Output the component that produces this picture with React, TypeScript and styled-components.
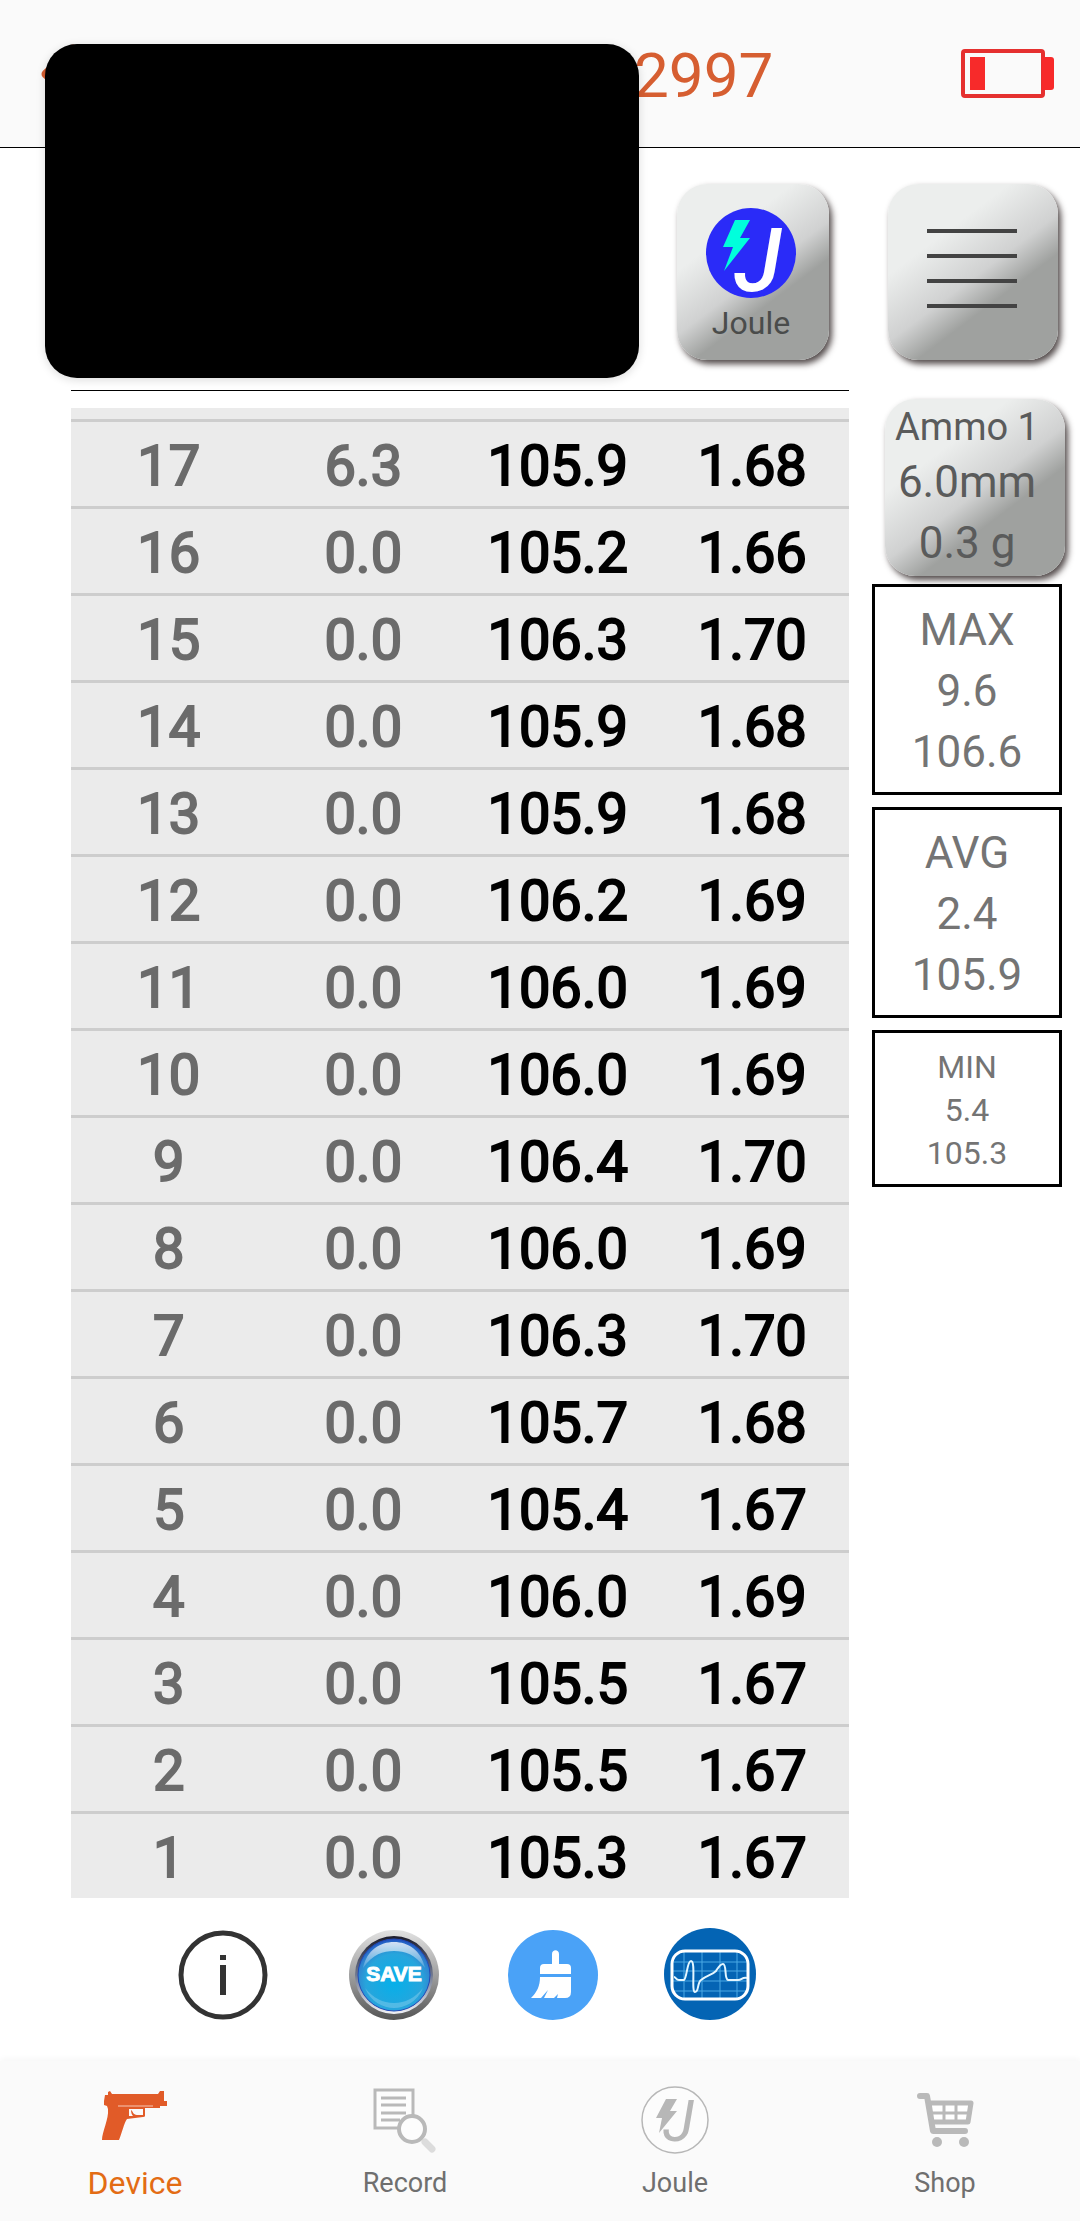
import React from "react";
import styled, { createGlobalStyle, css } from "styled-components";

const GlobalStyle = createGlobalStyle`
  * { box-sizing: border-box; }
  body {
    margin: 0;
    background: #ffffff;
    font-family: Roboto, "Liberation Sans", sans-serif;
  }
  button { font: inherit; color: inherit; }
`;

const Page = styled.div`
  position: relative;
  display: flex;
  flex-direction: column;
  min-height: 100vh;
`;

const Header = styled.header`
  display: flex;
  align-items: center;
  height: 148px;
  padding: 0 26px 0 40px;
  background: #fafafa;
  border-bottom: 1px solid #000000;
`;

const PlainButton = styled.button`
  display: block;
  padding: 0;
  border: 0;
  background: none;
  cursor: pointer;

  svg { display: block; }
`;

const Title = styled.h1`
  flex: 1;
  margin: 0 0 0 556px;
  padding-top: 5px;
  color: #d65e31;
  font-size: 62px;
  font-weight: 400;
  line-height: 72px;
`;

const PrivacyCover = styled.div`
  position: absolute;
  top: 44px;
  left: 45px;
  width: 594px;
  height: 334px;
  border-radius: 32px;
  background: #000000;
  box-shadow: 0 2px 10px rgba(0, 0, 0, 0.14);
`;

const Main = styled.main`
  display: flex;
  gap: 23px;
  padding-left: 71px;
`;

const ShotColumn = styled.section`
  flex: 1;
`;

const Readout = styled.div`
  display: flex;
  justify-content: flex-end;
  height: 243px;
  margin-bottom: 17px;
  padding: 36px 20px 0 0;
  border-bottom: 1px solid #000000;
`;

const glossy = css`
  border: 0;
  border-radius: 30px;
  background: linear-gradient(143deg, #eceeed 0%, #eceeed 30%, #d0d1d1 52%, #9fa19f 65%, #9fa19f 100%);
  box-shadow: 3px 4px 6px rgba(40, 30, 30, 0.8);
  cursor: pointer;
`;

const JouleButton = styled.button`
  ${glossy}
  display: flex;
  flex-direction: column;
  align-items: center;
  gap: 6px;
  width: 152px;
  height: 176px;
  padding: 24px 4px 0 0;
  color: #4a4c4b;
  font-size: 32px;
  line-height: 38px;

  svg { overflow: visible; }
`;

const MenuButton = styled.button`
  ${glossy}
  display: flex;
  flex-direction: column;
  align-items: center;
  gap: 21px;
  width: 170px;
  height: 176px;
  margin: 0 0 39px 16px;
  padding: 45px 2px 0 0;
`;

const MenuLine = styled.span`
  width: 90px;
  height: 4px;
  background: #434343;
`;

const AmmoButton = styled.button`
  ${glossy}
  display: flex;
  flex-direction: column;
  align-items: center;
  width: 180px;
  height: 177px;
  margin: 0 0 8px 13px;
  padding: 3px 16px 0 0;
  color: #5a5b5b;
  font-size: 44px;
  line-height: 61px;
  white-space: nowrap;
`;

const AmmoName = styled.span`
  font-size: 38px;
  line-height: 50px;
`;

const Side = styled.aside`
  width: 208px;
  padding-top: 36px;
`;

const StatBox = styled.div<{ $small?: boolean }>`
  display: flex;
  flex-direction: column;
  align-items: center;
  width: 190px;
  margin-bottom: 12px;
  padding: 13px 0 9px;
  border: 3px solid #000000;
  color: #747474;
  font-size: ${(p) => (p.$small ? 32 : 44)}px;
  line-height: ${(p) => (p.$small ? 43 : 61)}px;
`;

const ShotList = styled.div`
  padding-top: 11px;
  background: #ebebeb;
`;

const ShotTable = styled.table`
  width: 100%;
  table-layout: fixed;
  border-collapse: separate;
  border-spacing: 0;
`;

const Cell = styled.td<{ $strong?: boolean }>`
  height: 87px;
  padding: 4px 0 0 1px;
  border-top: 3px solid #cdcdcd;
  color: ${(p) => (p.$strong ? "#000000" : "#6b6b6b")};
  -webkit-text-stroke: 2px ${(p) => (p.$strong ? "#000000" : "#6b6b6b")};
  font-size: 56px;
  line-height: 80px;
  text-align: center;
`;

const Toolbar = styled.div`
  display: grid;
  grid-template-columns: 171px 159px 156px 93px;
  align-items: center;
  padding: 30px 0 40px 178px;
`;

const Nav = styled.nav`
  display: grid;
  grid-template-columns: repeat(4, 1fr);
  height: 160px;
  margin-top: auto;
  background: #fafafa;
  box-shadow: 0 -2px 6px rgba(0, 0, 0, 0.04);
`;

const NavLink = styled.a<{ $active?: boolean }>`
  display: flex;
  flex-direction: column;
  align-items: center;
  gap: 9px;
  padding-top: 26px;
  color: ${(p) => (p.$active ? "#e36c14" : "#6f6f6f")};
  font-size: ${(p) => (p.$active ? 32 : 27)}px;
  line-height: 38px;
  text-decoration: none;

  svg { display: block; overflow: visible; }
`;

type Shot = [number, string, string, string];

const shots: Shot[] = [
  [17, "6.3", "105.9", "1.68"],
  [16, "0.0", "105.2", "1.66"],
  [15, "0.0", "106.3", "1.70"],
  [14, "0.0", "105.9", "1.68"],
  [13, "0.0", "105.9", "1.68"],
  [12, "0.0", "106.2", "1.69"],
  [11, "0.0", "106.0", "1.69"],
  [10, "0.0", "106.0", "1.69"],
  [9, "0.0", "106.4", "1.70"],
  [8, "0.0", "106.0", "1.69"],
  [7, "0.0", "106.3", "1.70"],
  [6, "0.0", "105.7", "1.68"],
  [5, "0.0", "105.4", "1.67"],
  [4, "0.0", "106.0", "1.69"],
  [3, "0.0", "105.5", "1.67"],
  [2, "0.0", "105.5", "1.67"],
  [1, "0.0", "105.3", "1.67"],
];

const BackIcon = () => (
  <svg width="38" height="66" viewBox="0 0 38 66">
    <path d="M33 8 L6 33 L33 58" fill="none" stroke="#d65e31" strokeWidth="9" strokeLinecap="round" strokeLinejoin="round" />
  </svg>
);

const BatteryIcon = () => (
  <svg width="93" height="49" viewBox="0 0 93 49" role="img" aria-label="Battery low">
    <rect x="2" y="2" width="80" height="45" rx="2" fill="none" stroke="#e5302f" strokeWidth="4" />
    <rect x="9" y="8" width="15" height="33" fill="#f72a2a" />
    <path d="M81 8 H90 Q93 8 93 11 V38 Q93 41 90 41 H81 Z" fill="#f72a2a" />
  </svg>
);

const JouleIcon = () => (
  <svg width="90" height="90" viewBox="0 0 90 90" aria-hidden="true">
    <circle cx="45" cy="45" r="45" fill="#2a2bf8" />
    <path d="M29 12 H44 L34 30 H44 L18 63 L27 39 H17 Z" fill="#00ffdc" />
    <text x="28" y="83" fill="#ffffff" fontFamily="Roboto, sans-serif" fontSize="88" fontStyle="italic" fontWeight="500">J</text>
  </svg>
);

const InfoIcon = () => (
  <svg width="90" height="90" viewBox="0 0 90 90">
    <circle cx="45" cy="45" r="42" fill="none" stroke="#333333" strokeWidth="5" />
    <rect x="42" y="25" width="6" height="5" fill="#333333" />
    <rect x="42" y="35" width="6" height="30" fill="#333333" />
  </svg>
);

const SaveIcon = () => (
  <svg width="90" height="90" viewBox="0 0 90 90">
    <defs>
      <linearGradient id="rim" x1="0" y1="0" x2="0" y2="1">
        <stop offset="0" stopColor="#e2e2e2" />
        <stop offset="0.5" stopColor="#a0a0a0" />
        <stop offset="1" stopColor="#555555" />
      </linearGradient>
      <linearGradient id="well" x1="0" y1="0" x2="0" y2="1">
        <stop offset="0" stopColor="#1c1c2c" />
        <stop offset="0.5" stopColor="#6f7890" />
        <stop offset="1" stopColor="#f2f2f6" />
      </linearGradient>
      <radialGradient id="glass" cx="0.5" cy="0.6" r="0.6">
        <stop offset="0" stopColor="#05b0ea" />
        <stop offset="0.65" stopColor="#27a5dc" />
        <stop offset="0.85" stopColor="#2f86d0" />
        <stop offset="1" stopColor="#1f4fc0" />
      </radialGradient>
      <linearGradient id="shine" x1="0" y1="0" x2="0" y2="1">
        <stop offset="0" stopColor="#ffffff" stopOpacity="0.8" />
        <stop offset="1" stopColor="#ffffff" stopOpacity="0.15" />
      </linearGradient>
    </defs>
    <circle cx="45" cy="45" r="45" fill="url(#rim)" />
    <circle cx="45" cy="45" r="39" fill="url(#well)" />
    <circle cx="45" cy="45" r="36" fill="url(#glass)" stroke="#2149b8" strokeWidth="1" />
    <path d="M14 38 C18 20 31 12 45 12 C59 12 72 20 76 38 C66 24 56 21 45 21 C34 21 24 24 14 38 Z" fill="url(#shine)" />
    <path d="M16 58 C22 72 34 78 45 78 C56 78 68 72 74 58 C66 68 56 73 45 73 C34 73 24 68 16 58 Z" fill="#ffffff" fillOpacity="0.22" />
    <text x="45" y="51" textAnchor="middle" fill="#ffffff" stroke="#ffffff" strokeWidth="1" fontFamily="Liberation Sans, sans-serif" fontWeight="700" fontSize="21">SAVE</text>
  </svg>
);

const BrushIcon = () => (
  <svg width="90" height="90" viewBox="0 0 90 90">
    <circle cx="45" cy="45" r="45" fill="#4aa2f7" />
    <path d="M44 34 V24 C44 19 51 19 51 24 V34 H59 Q63 34 63 38 V44 H32 V38 Q32 34 36 34 Z" fill="#ffffff" />
    <path d="M32 47 H63 V62 Q63 68 57 68 H49 L50 64 L46 68 H36 L40 60 L33 68 H23 C29 62 32 56 32 47 Z" fill="#ffffff" />
  </svg>
);

const WaveIcon = () => (
  <svg width="93" height="93" viewBox="0 0 93 93">
    <circle cx="46" cy="46" r="46" fill="#0464b4" />
    <g stroke="#4aa8e4" strokeWidth="1" fill="none">
      <path d="M20 24 V70 M38 24 V70 M56 24 V70 M73 24 V70" />
      <path d="M9 34 H83 M9 43 H83 M9 53 H83 M9 63 H83" />
    </g>
    <rect x="8" y="23" width="76" height="48" rx="13" fill="none" stroke="#ffffff" strokeWidth="3" />
    <path d="M10 49 C12 49 12 52 15 52 H20 C23 50 23 33 27 33 C32 33 27 64 31 64 C35 64 33 55 37 52 C43 47 48 47 52 43 C54 40 56 36 59 36 C63 36 60 51 64 52 H74 C78 52 78 49 83 50" fill="none" stroke="#e4f6ff" strokeWidth="2" />
  </svg>
);

const PistolIcon = () => (
  <svg width="68" height="68" viewBox="0 0 68 68" aria-hidden="true">
    <path d="M7 5 L9 4 L11 7 H57 L59 4 H63 V14 H66 V19 H59 V21 H44 V29 Q44 30 42 30 L26 32 C23 36 21 46 18 53 H1 C1 45 8 32 7 22 L6 19 L3 18 V14 L4 8 H7 Z" fill="#e15b28" />
    <path d="M28 22 H42 V28 H36 C32 28 32 24 30 23 C30 26 31 28 32 29 H28 Z" fill="#fafafa" />
    <path d="M17 19 H52" stroke="#f6c8b5" strokeWidth="1" />
  </svg>
);

const RecordIcon = () => (
  <svg width="68" height="68" viewBox="0 0 68 68" aria-hidden="true">
    <rect x="4" y="3" width="38" height="38" fill="#fdfdfd" stroke="#b9b9b9" strokeWidth="3" />
    <path d="M10 11 H35 M10 18 H35 M10 26 H35 M10 33 H29" stroke="#b9b9b9" strokeWidth="3" />
    <path d="M54 55 L61 62" stroke="#dcdcdc" strokeWidth="7" strokeLinecap="round" />
    <circle cx="41" cy="42" r="13" fill="#fdfdfd" stroke="#b9b9b9" strokeWidth="4" />
  </svg>
);

const JouleOutlineIcon = () => (
  <svg width="68" height="68" viewBox="0 0 68 68" aria-hidden="true">
    <circle cx="34" cy="33" r="33" fill="#fcfcfc" stroke="#b7b7b7" strokeWidth="1.5" />
    <path d="M25 12 H36 L29 24 H36 L18 46 L21 31 H15 Z" fill="#b7b7b7" />
    <text x="22" y="54" fill="#b7b7b7" fontFamily="Roboto, sans-serif" fontSize="58" fontStyle="italic">J</text>
  </svg>
);

const CartIcon = () => (
  <svg width="68" height="68" viewBox="0 0 68 68" aria-hidden="true">
    <g fill="none" stroke="#b9b9b9" strokeLinecap="round" strokeLinejoin="round">
      <path d="M9 9 H16 L22 44 H54" strokeWidth="6" />
      <path d="M18 16 H60 L57 35 H21 Z" strokeWidth="5" fill="#ffffff" />
      <path d="M33 17 V35 M45 17 V35 M20 26 H59" strokeWidth="3" />
    </g>
    <circle cx="26" cy="55" r="5" fill="#b9b9b9" />
    <circle cx="53" cy="55" r="5" fill="#b9b9b9" />
  </svg>
);

export default function App() {
  return (
    <>
      <GlobalStyle />
      <Page>
        <Header>
          <PlainButton type="button" aria-label="Back">
            <BackIcon />
          </PlainButton>
          <Title>2997</Title>
          <BatteryIcon />
        </Header>

        <Main>
          <ShotColumn>
            <Readout>
              <JouleButton type="button">
                <JouleIcon />
                Joule
              </JouleButton>
            </Readout>
            <ShotList>
              <ShotTable>
                <tbody>
                  {shots.map(([index, rate, speed, energy]) => (
                    <tr key={index}>
                      <Cell>{index}</Cell>
                      <Cell>{rate}</Cell>
                      <Cell $strong>{speed}</Cell>
                      <Cell $strong>{energy}</Cell>
                    </tr>
                  ))}
                </tbody>
              </ShotTable>
            </ShotList>
          </ShotColumn>

          <Side>
            <MenuButton type="button" aria-label="Menu">
              <MenuLine />
              <MenuLine />
              <MenuLine />
              <MenuLine />
            </MenuButton>
            <AmmoButton type="button">
              <AmmoName>Ammo 1</AmmoName>
              <span>6.0mm</span>
              <span>0.3 g</span>
            </AmmoButton>
            <StatBox>
              <span>MAX</span>
              <span>9.6</span>
              <span>106.6</span>
            </StatBox>
            <StatBox>
              <span>AVG</span>
              <span>2.4</span>
              <span>105.9</span>
            </StatBox>
            <StatBox $small>
              <span>MIN</span>
              <span>5.4</span>
              <span>105.3</span>
            </StatBox>
          </Side>
        </Main>

        <Toolbar>
          <PlainButton type="button" aria-label="Info"><InfoIcon /></PlainButton>
          <PlainButton type="button" aria-label="Save"><SaveIcon /></PlainButton>
          <PlainButton type="button" aria-label="Clear"><BrushIcon /></PlainButton>
          <PlainButton type="button" aria-label="Chart"><WaveIcon /></PlainButton>
        </Toolbar>

        <Nav>
          <NavLink href="#device" $active><PistolIcon />Device</NavLink>
          <NavLink href="#record"><RecordIcon />Record</NavLink>
          <NavLink href="#joule"><JouleOutlineIcon />Joule</NavLink>
          <NavLink href="#shop"><CartIcon />Shop</NavLink>
        </Nav>
        <PrivacyCover />
      </Page>
    </>
  );
}
